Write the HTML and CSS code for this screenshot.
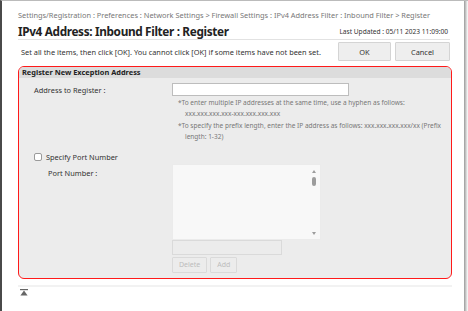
FILE: index.html
```html
<!DOCTYPE html>
<html lang="en">
<head>
  <meta charset="UTF-8" />
  <title>IPv4 Address: Inbound Filter : Register</title>
  <link rel="stylesheet" href="styles.css">
</head>
<body>

<div class="frame">
  <div class="page">
    <div class="breadcrumb">Settings/Registration : Preferences : Network Settings &gt; Firewall Settings : IPv4 Address Filter : Inbound Filter &gt; Register</div>

    <div class="title-row">
      <h1>IPv4 Address: Inbound Filter : Register</h1>
      <span class="updated">Last Updated : 05/11 2023 11:09:00</span>
    </div>

    <div class="action-row">
      <p class="hint">Set all the items, then click [OK]. You cannot click [OK] if some items have not been set.</p>
      <div class="actions">
        <button class="btn btn-ok">OK</button>
        <button class="btn btn-cancel">Cancel</button>
      </div>
    </div>

    <div class="panel">
      <div class="panel-head">Register New Exception Address</div>
      <div class="panel-body">
        <div class="field">
          <label class="field-label" for="addr">Address to Register :</label>
          <div class="field-value">
            <input id="addr" class="text-input addr-input" type="text">
            <p class="note">*To enter multiple IP addresses at the same time, use a hyphen as follows: xxx.xxx.xxx.xxx-xxx.xxx.xxx.xxx</p>
            <p class="note">*To specify the prefix length, enter the IP address as follows: xxx.xxx.xxx.xxx/xx (Prefix length: 1-32)</p>
          </div>
        </div>

        <label class="check">
          <span class="box"></span>
          <span>Specify Port Number</span>
        </label>

        <div class="field port-field">
          <span class="field-label sub">Port Number :</span>
          <div class="field-value">
            <div class="listbox">
              <div class="scroll">
                <span class="arrow up"></span>
                <span class="thumb"></span>
                <span class="spacer"></span>
                <span class="arrow down"></span>
              </div>
            </div>
            <div class="port-input"></div>
            <div class="list-actions">
              <button class="btn small" disabled>Delete</button>
              <button class="btn small" disabled>Add</button>
            </div>
          </div>
        </div>
      </div>
    </div>

    <div class="footer">
      <svg class="to-top" width="8" height="7" viewBox="0 0 8 7">
        <rect x="0" y="0" width="8" height="1.2" fill="#666"/>
        <path d="M4 1.6 L7.6 6.4 L0.4 6.4 Z" fill="#666"/>
      </svg>
    </div>
  </div>
</div>

</body>
</html>
```

FILE: styles.css
```css
html, body {
  margin: 0;
  padding: 0;
  background: #fff;
}

body {
  font-family: 'Noto Sans', 'Open Sans', sans-serif;
  color: #333;
}

.frame {
  width: 468px;
  height: 311px;
  box-sizing: border-box;
  border-left: 2px solid #4a4a4a;
  border-top: 1px solid #bbb;
  overflow: hidden;
  position: relative;
}

.frame::after {
  content: "";
  position: absolute;
  top: 0;
  right: 0;
  width: 4px;
  height: 100%;
  background: linear-gradient(to right, #9a9a9a, #d8d8d8 60%, #fff);
}

.page {
  padding: 8px 0 0 16px;
  width: 432px;
}

.breadcrumb {
  font-size: 7.4px;
  color: #777;
  white-space: nowrap;
  height: 12px;
  line-height: 12px;
}

.title-row {
  display: flex;
  justify-content: space-between;
  align-items: flex-end;
  border-bottom: 1px solid #e2e2e2;
  padding: 3px 0 1px;
}

h1 {
  margin: 0;
  font-size: 11.8px;
  letter-spacing: -0.35px;
  line-height: 14px;
  color: #222;
  font-weight: bold;
}

.updated {
  font-size: 6.6px;
  color: #333;
  line-height: 12px;
  padding-right: 2px;
}

.action-row {
  display: flex;
  justify-content: space-between;
  align-items: center;
  padding: 2px 0 5px 3px;
}

.hint {
  margin: 0;
  font-size: 7.4px;
  color: #333;
}

.actions {
  display: flex;
  gap: 4px;
}

.btn {
  font-family: inherit;
  font-size: 7.4px;
  color: #333;
  background: #eeeeee;
  border: 1px solid #d4d4d4;
  border-radius: 1px;
  padding: 0;
  height: 19px;
}

.btn-ok {
  width: 53px;
}

.btn-cancel {
  width: 55px;
}

.panel {
  border: 1.5px solid #ff1a1a;
  border-radius: 6px;
  background: #ececec;
  height: 213px;
  width: 434px;
  box-sizing: border-box;
  overflow: hidden;
}

.panel-head {
  background: #dcdcdc;
  font-size: 7.4px;
  font-weight: bold;
  color: #222;
  height: 11px;
  line-height: 11px;
  padding-left: 3px;
}

.panel-body {
  padding: 5px 0 0 15px;
}

.field {
  display: flex;
}

.field-label {
  width: 138px;
  font-size: 7.4px;
  color: #333;
  line-height: 14px;
}

.field-label.sub {
  width: 124px;
  padding-left: 14px;
  padding-top: 3px;
  line-height: 12px;
}

.field-value {
  display: flex;
  flex-direction: column;
}

.text-input {
  box-sizing: border-box;
  border: 1px solid #bdbdbd;
  background: #fff;
  margin: 0;
  padding: 0;
}

.addr-input {
  width: 177px;
  height: 13px;
}

.note {
  margin: 0;
  font-size: 6.5px;
  line-height: 11.4px;
  color: #777;
  width: 264px;
  padding-left: 13px;
  text-indent: -7px;
}

.note:first-of-type {
  margin-top: 1px;
}

.check {
  display: flex;
  align-items: center;
  gap: 4px;
  margin: 9px 0 0 0;
  font-size: 7.4px;
  color: #333;
  height: 10px;
}

.box {
  width: 6px;
  height: 6px;
  border: 1px solid #9a9a9a;
  border-radius: 2px;
  background: #fff;
}

.port-field {
  margin-top: 2px;
}

.listbox {
  width: 149px;
  height: 76px;
  box-sizing: border-box;
  background: #f8f8f8;
  border: 1px solid #ebebeb;
  display: flex;
  justify-content: flex-end;
}

.scroll {
  width: 8px;
  display: flex;
  flex-direction: column;
  align-items: center;
  padding: 5px 2px 4px 0;
}

.arrow {
  width: 0;
  height: 0;
  border-left: 2.5px solid transparent;
  border-right: 2.5px solid transparent;
}

.arrow.up {
  border-bottom: 3px solid #9c9c9c;
}

.arrow.down {
  border-top: 3px solid #9c9c9c;
}

.thumb {
  width: 4px;
  height: 9px;
  border-radius: 2px;
  background: #9c9c9c;
  margin-top: 4px;
}

.spacer {
  flex: 1;
}

.port-input {
  width: 110px;
  height: 15px;
  box-sizing: border-box;
  border: 1px solid #dadada;
  background: #ececec;
}

.list-actions {
  display: flex;
  gap: 3px;
  margin-top: 2px;
}

.btn.small {
  height: 16px;
  font-size: 7px;
  color: #bcbcbc;
  background: #ececec;
  border-color: #dadada;
  padding: 0 6px;
}

.footer {
  margin-top: 6px;
  border-top: 2px solid #f2f2f2;
  width: 432px;
  padding: 2px 0 0 2px;
}

.to-top {
  display: block;
}
```
